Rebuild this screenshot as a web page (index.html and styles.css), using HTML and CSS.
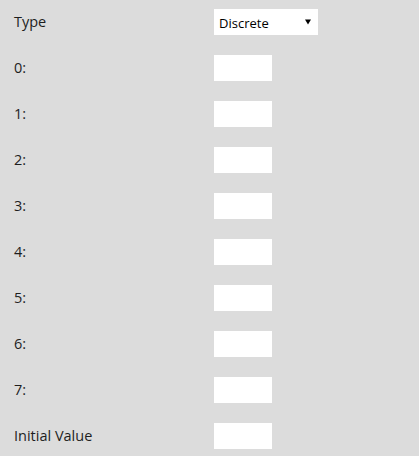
FILE: index.html
```html
<!DOCTYPE html>
<html>
<head>
<meta charset="utf-8">
<link rel="stylesheet" href="styles.css">
</head>
<body>
<form class="form">
  <label class="label">Type</label>
  <div class="select">
    <span class="select-text">Discrete</span>
    <svg class="arrow" width="6" height="6" viewBox="0 0 6 6"><path d="M0 0.5H6L3 5.5Z" fill="#000"/></svg>
  </div>
  <label class="label">0:</label><input class="field" type="text">
  <label class="label">1:</label><input class="field" type="text">
  <label class="label">2:</label><input class="field" type="text">
  <label class="label">3:</label><input class="field" type="text">
  <label class="label">4:</label><input class="field" type="text">
  <label class="label">5:</label><input class="field" type="text">
  <label class="label">6:</label><input class="field" type="text">
  <label class="label">7:</label><input class="field" type="text">
  <label class="label">Initial Value</label><input class="field" type="text">
</form>
</body>
</html>
```
FILE: styles.css
```css
html, body {
  margin: 0;
  padding: 0;
  background: #dcdcdc;
}
.form {
  display: grid;
  grid-template-columns: 200px 104px;
  grid-auto-rows: 26px;
  row-gap: 20px;
  padding: 9px 0 0 14px;
  font-family: "Open Sans", "Noto Sans", sans-serif;
  font-size: 14.5px;
  color: #1e1e1e;
}
.label {
  display: flex;
  align-items: center;
  padding-bottom: 2px;
}
.select {
  width: 104px;
  height: 26px;
  background: #fff;
  display: flex;
  align-items: center;
  justify-content: space-between;
  padding: 0 7px 0 5px;
  box-sizing: border-box;
  font-size: 13px;
  color: #000;
}
.select-text {
  padding-top: 1px;
}
.arrow {
  display: block;
}
.field {
  width: 58px;
  height: 26px;
  box-sizing: border-box;
  border: none;
  margin: 0;
  padding: 0;
  background: #fff;
  outline: none;
}
```
